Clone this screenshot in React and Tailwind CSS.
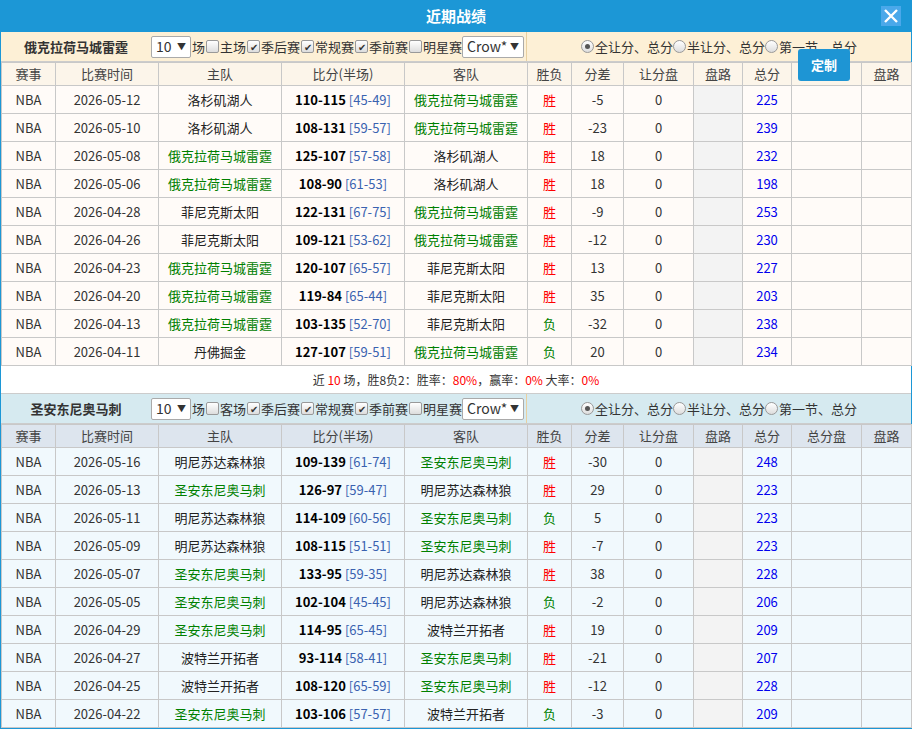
import React from "react";

const W=[54,103,123,123,123,44,52,70,49,49,70,50];
const HEAD=["赛事","比赛时间","主队","比分(半场)","客队","胜负","分差","让分盘","盘路","总分","总分盘","盘路"];
const OKC="俄克拉荷马城雷霆", LAL="洛杉矶湖人", PHX="菲尼克斯太阳", DEN="丹佛掘金";
const SAS="圣安东尼奥马刺", MIN="明尼苏达森林狼", POR="波特兰开拓者";
const A=[
["2026-05-12",LAL,"110-115","45-49",OKC,"胜","-5","225"],
["2026-05-10",LAL,"108-131","59-57",OKC,"胜","-23","239"],
["2026-05-08",OKC,"125-107","57-58",LAL,"胜","18","232"],
["2026-05-06",OKC,"108-90","61-53",LAL,"胜","18","198"],
["2026-04-28",PHX,"122-131","67-75",OKC,"胜","-9","253"],
["2026-04-26",PHX,"109-121","53-62",OKC,"胜","-12","230"],
["2026-04-23",OKC,"120-107","65-57",PHX,"胜","13","227"],
["2026-04-20",OKC,"119-84","65-44",PHX,"胜","35","203"],
["2026-04-13",OKC,"103-135","52-70",PHX,"负","-32","238"],
["2026-04-11",DEN,"127-107","59-51",OKC,"负","20","234"],
];
const B=[
["2026-05-16",MIN,"109-139","61-74",SAS,"胜","-30","248"],
["2026-05-13",SAS,"126-97","59-47",MIN,"胜","29","223"],
["2026-05-11",MIN,"114-109","60-56",SAS,"负","5","223"],
["2026-05-09",MIN,"108-115","51-51",SAS,"胜","-7","223"],
["2026-05-07",SAS,"133-95","59-35",MIN,"胜","38","228"],
["2026-05-05",SAS,"102-104","45-45",MIN,"负","-2","206"],
["2026-04-29",SAS,"114-95","65-45",POR,"胜","19","209"],
["2026-04-27",POR,"93-114","58-41",SAS,"胜","-21","207"],
["2026-04-25",POR,"108-120","65-59",SAS,"胜","-12","228"],
["2026-04-22",SAS,"103-106","57-57",POR,"负","-3","209"],
];

const Cb=({on})=>(
  <span className={"inline-flex items-center justify-center w-[13px] h-[13px] border border-[#999] rounded-[2px] bg-[linear-gradient(#fff,#ddd)] text-[10px] leading-none mx-[1px] "+(on?"text-[#333]":"")}>{on?"✔":""}</span>
);
const Rd=({on})=>(
  <span className="inline-flex items-center justify-center w-[13px] h-[13px] border border-[#999] rounded-full bg-[linear-gradient(#fff,#ddd)] mr-[1px]">{on&&<span className="w-[5px] h-[5px] rounded-full bg-[#555]"/>}</span>
);
const Sel=({w,t})=>(
  <span className={"inline-flex items-center justify-between h-[22px] border border-[#aaa] bg-white px-[4px] text-[14px] rounded-[2px] "+w}>{t}<span className="text-[9px]">▼</span></span>
);

function Filter({team,home,bg,btn}){
  return (
    <div className={"flex h-[30px] border-b border-[#ccc] "+bg}>
      <div className="w-[526px] flex items-center border-r border-[#e8d0a0]">
        <div className="w-[150px] text-center font-bold text-[13px]">{team}</div>
        <Sel w="w-[40px]" t="10"/>
        <span className="flex items-center text-[13px] ml-[1px]">场<Cb/>{home}<Cb on/>季后赛<Cb on/>常规赛<Cb on/>季前赛<Cb/>明星赛</span>
        <Sel w="w-[62px]" t="Crow*"/>
      </div>
      <div className="flex-1 flex items-center justify-center text-[13px] relative">
        <Rd on/>全让分、总分<Rd/>半让分、总分<Rd/>第一节、总分
        {btn&&<div className="absolute left-[271px] top-[17px] w-[52px] h-[32px] rounded-[3px] bg-[#1e95d4] text-white text-[13px] font-bold flex items-center justify-center">定制</div>}
      </div>
    </div>
  );
}

function Table({rows,team,hbg,rbg,hideCol}){
  return (
    <table className="table-fixed border-collapse text-[13px]" style={{width:910}}>
      <colgroup>{W.map((w,i)=><col key={i} style={{width:w}}/>)}</colgroup>
      <tbody>
        <tr className={"h-[23px] "+hbg}>{HEAD.map((h,i)=><td key={i} className="border border-[#c8c8c8] text-center text-[#444] p-0">{hideCol&&i===10?"":h}</td>)}</tr>
        {rows.map((r,i)=>(
          <tr key={i} className={"h-[28px] "+rbg}>
            <td className="border border-[#c8c8c8] text-center text-[#333] p-0">NBA</td>
            <td className="border border-[#c8c8c8] text-center text-[#333] p-0">{r[0]}</td>
            <td className={"border border-[#c8c8c8] text-center p-0 "+(r[1]===team?"text-[#008000]":"text-[#222]")}>{r[1]}</td>
            <td className="border border-[#c8c8c8] text-center p-0"><b className="text-black">{r[2]}</b> <span className="text-[#3a62b0]">[{r[3]}]</span></td>
            <td className={"border border-[#c8c8c8] text-center p-0 "+(r[4]===team?"text-[#008000]":"text-[#222]")}>{r[4]}</td>
            <td className={"border border-[#c8c8c8] text-center p-0 "+(r[5]==="胜"?"text-[#ff0000]":"text-[#008000]")}>{r[5]}</td>
            <td className="border border-[#c8c8c8] text-center text-[#333] p-0">{r[6]}</td>
            <td className="border border-[#c8c8c8] text-center text-[#333] p-0">0</td>
            <td className="border border-[#c8c8c8] p-0 bg-[#f3f3f3]"></td>
            <td className="border border-[#c8c8c8] text-center text-[#0000ee] p-0">{r[7]}</td>
            <td className="border border-[#c8c8c8] p-0"></td>
            <td className="border border-[#c8c8c8] p-0"></td>
          </tr>
        ))}
      </tbody>
    </table>
  );
}

export default function App(){
  return (
    <div className="w-[912px] h-[729px] overflow-hidden bg-white text-[#333]" style={{fontFamily:'"Microsoft YaHei","Noto Sans CJK SC",sans-serif'}}>
      <div className="border border-[#1c97d6] w-[912px]">
        <div className="h-[31px] bg-[#1c97d6] flex items-center justify-center relative">
          <span className="text-white font-bold text-[15px]">近期战绩</span>
          <div className="absolute right-[10px] top-[5px] w-[20px] h-[20px] bg-[#4aa8ea] flex items-center justify-center">
            <svg width="14" height="14" viewBox="0 0 14 14"><path d="M1 1L13 13M13 1L1 13" stroke="#fff" strokeWidth="2.4"/></svg>
          </div>
        </div>
        <Filter team={OKC} home="主场" bg="bg-[#fdf0d6]" btn/>
        <Table rows={A} team={OKC} hbg="bg-[#fcf5ea]" rbg="bg-[#fffbf8]" hideCol/>
        <div className="h-[28px] flex items-center justify-center text-[12px] text-[#333] border-b border-[#ccc]">
          近&nbsp;<span className="text-[#f00]">10</span>&nbsp;场，胜8负2：胜率：<span className="text-[#f00]">80%</span>，赢率：<span className="text-[#f00]">0%</span>&nbsp;大率：<span className="text-[#f00]">0%</span>
        </div>
        <Filter team={SAS} home="客场" bg="bg-[#d6eaf0]"/>
        <Table rows={B} team={SAS} hbg="bg-[#dde5ee]" rbg="bg-[#f1f9fd]"/>
      </div>
    </div>
  );
}
